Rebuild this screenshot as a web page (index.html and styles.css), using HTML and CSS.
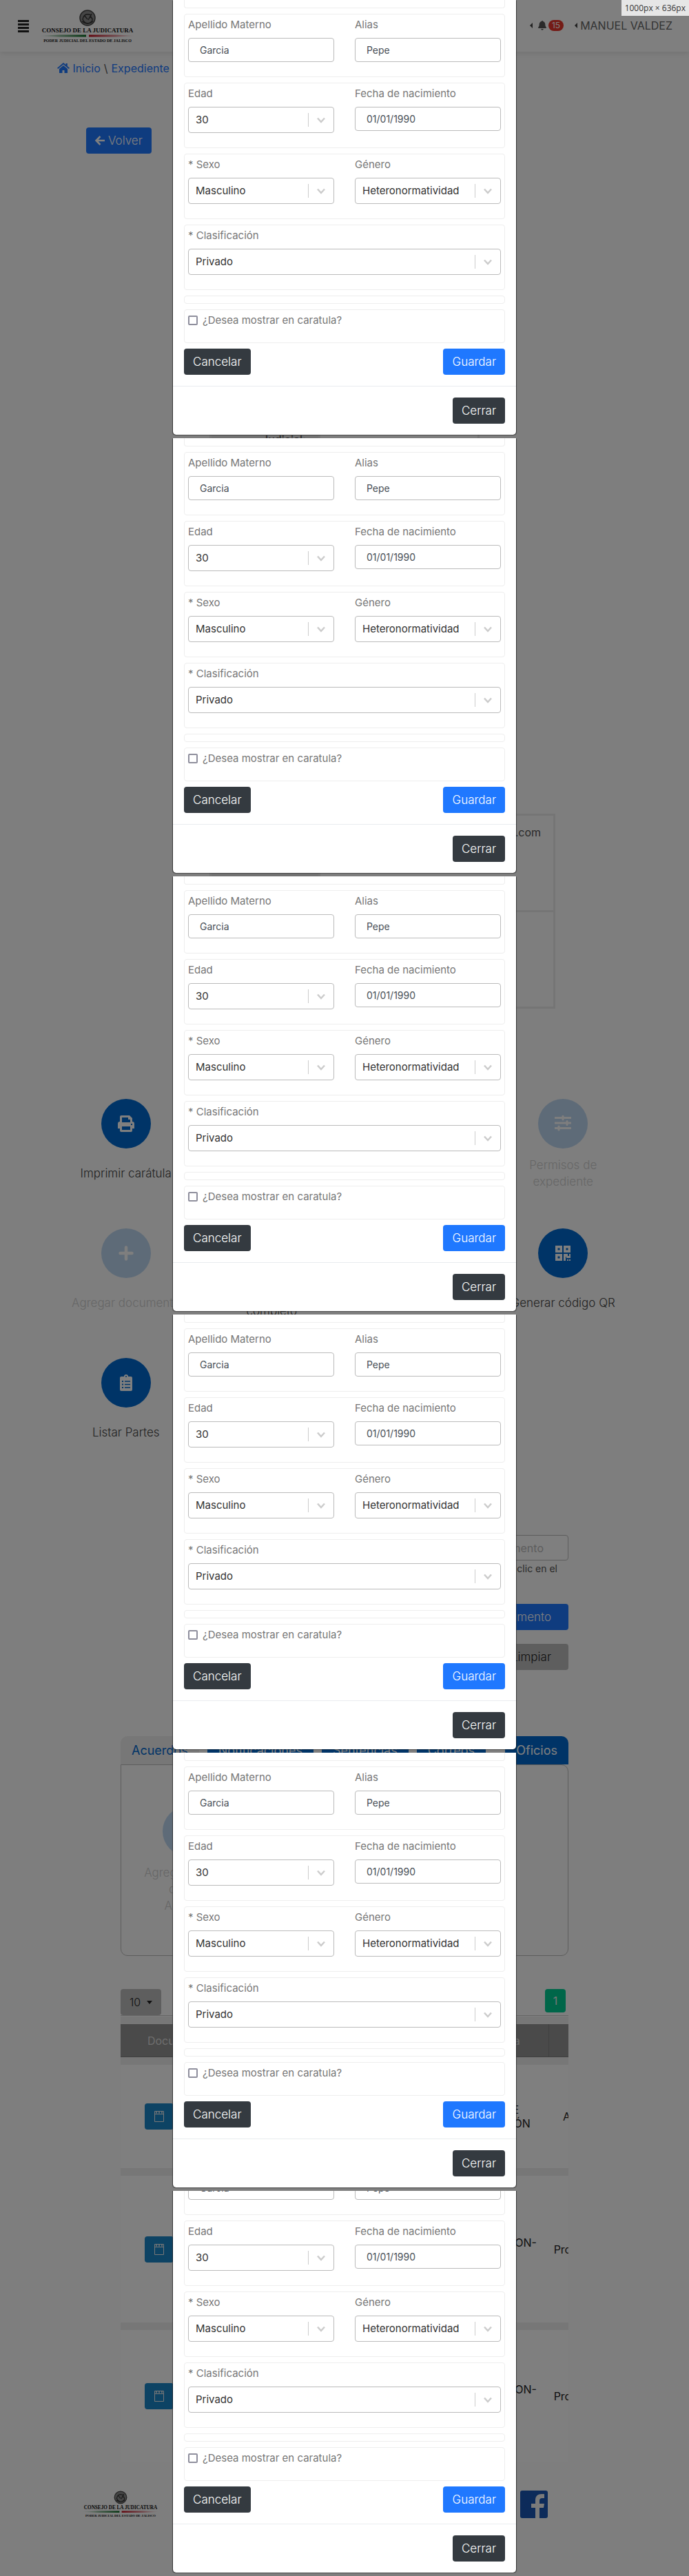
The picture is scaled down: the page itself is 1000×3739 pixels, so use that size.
FILE: index.html
```html
<!DOCTYPE html>
<html lang="es">
<head>
<meta charset="utf-8">
<title>Expediente</title>
<meta name="viewport" content="width=device-width, initial-scale=1">
<link rel="stylesheet" href="styles.css">
</head>
<body>
<svg class="defs" aria-hidden="true">
  <symbol id="logo" viewBox="0 0 142 48">
    <circle cx="71" cy="12" r="11" fill="#8a8a8a" stroke="#444" stroke-width="1.5"/>
    <path d="M64 14c1-6 5-8 9-7 3 0 4 3 2 4 4 1 4 5 1 7-3 3-9 3-12-4zM66 8l5 6M77 6l-5 9M63 17c5 4 11 4 16 0" fill="none" stroke="#333" stroke-width="1.4"/>
    <text x="71" y="33" text-anchor="middle" class="logo-main">CONSEJO DE LA JUDICATURA</text>
    <path d="M0 38l30-1.5h39v3H30z" fill="url(#green)"/>
    <path d="M142 38l-30-1.5H73v3h39z" fill="url(#red)"/>
    <text x="71" y="47" text-anchor="middle" class="logo-sub">PODER JUDICIAL DEL ESTADO DE JALISCO</text>
  </symbol>
  <linearGradient id="green"><stop offset="0" stop-color="#fff"/><stop offset="1" stop-color="#086b22"/></linearGradient>
  <linearGradient id="red"><stop offset="0" stop-color="#c40d1e"/><stop offset="1" stop-color="#fff"/></linearGradient>
  <symbol id="note" viewBox="0 0 14 16"><path d="M.5 .5h13v15H.5zM.5 4.500h13" fill="none" stroke="currentColor"/><path d="M3 1v2.500M7 1v2.500M11 1v2.500" stroke="currentColor" stroke-width="1.500"/></symbol>
</svg>

<div class="page">
  <header class="top">
    <button class="burger" aria-label="Menú"><span></span><span></span><span></span><span></span></button>
    <svg class="logo" role="img" aria-label="Consejo de la Judicatura"><use href="#logo"/></svg>
    <nav class="user">
      <span class="caret-left"></span>
      <svg class="bell" viewBox="0 0 12 14"><path d="M6 0c.6 0 1 .4 1 .9 2 .4 3.300 2 3.300 4.200 0 2.500.6 3.500 1.400 4.400.6.700.2 1.600-.7 1.600H1c-.9 0-1.300-.9-.7-1.600.8-.9 1.400-1.900 1.400-4.400C1.700 2.900 3 1.300 5 .9 5 .4 5.400 0 6 0zM4.300 12h3.400a1.700 1.700 0 0 1-3.400 0z"/></svg>
      <span class="badge">15</span>
      <span class="caret-left"></span>
      <a href="#" class="name">MANUEL VALDEZ</a>
    </nav>
  </header>

  <nav class="crumbs">
    <a href="#"><svg viewBox="0 0 18 15"><path d="M9 0l3.500 3V1h2.300v4L18 7.700l-1.200 1.400L9 2.500 1.200 9.100 0 7.700zM9 4l6 5.100V15h-4.500v-4h-3v4H3V9.100z"/></svg> Inicio</a>
    <span>\</span>
    <a href="#">Expediente</a>
  </nav>

  <a href="#" class="btn blue back"><svg viewBox="0 0 14 14"><path d="M7.500 1L1.500 7l6 6M1.500 7H14" fill="none" stroke="currentColor" stroke-width="2.500"/></svg>Volver</a>

  <table class="info short"><tbody><tr><th>Partido Judicial:</th><td></td></tr></tbody></table>
  <table class="info wide"><tbody>
    <tr><th>Correo electrónico del actor:</th><td>correo@mail.com</td></tr>
    <tr><th></th><td></td></tr>
  </tbody></table>

  <section class="actions">
    <div class="action c1"><button class="disc" aria-label="Imprimir"><svg viewBox="0 0 24 24"><path fill-rule="evenodd" d="M3 2q0-2 2-2h12l4 4v5q3 0 3 3v7h-3v3q0 2-2 2H5q-2 0-2-2v-3H0v-7q0-3 3-3zM6 3v7h12V6h-3V3zM6 16v5h12v-5zM19 12v2h2v-2z"/></svg></button><p>Imprimir carátula</p></div>
    <div class="action c4 off"><button class="disc" aria-label="Permisos" disabled><svg viewBox="0 0 24 24"><path d="M0 3.500h24M0 11h24M0 18.500h24" stroke="currentColor" stroke-width="3"/><path d="M12 1v5M18 8.500v5M6 16v5" stroke="currentColor" stroke-width="3" stroke-linecap="round"/></svg></button><p>Permisos de expediente</p></div>
    <div class="action c1 off"><button class="disc" aria-label="Agregar" disabled><svg viewBox="0 0 24 24"><path d="M12 3.500v17M3.500 12h17" stroke="currentColor" stroke-width="4.500" stroke-linecap="round"/></svg></button><p>Agregar documento</p></div>
    <div class="action c2"><button class="disc" aria-label="Expediente"></button><p>Expediente<br>completo</p></div>
    <div class="action c4"><button class="disc" aria-label="Código QR"><svg viewBox="0 0 24 24"><path fill-rule="evenodd" d="M1 1h10v10H1zM4.500 4.500v3h3v-3zM13 1h10v10H13zM16.500 4.500v3h3v-3zM1 13h10v10H1zM4.500 16.500v3h3v-3zM13 13h6v3h2v-3h2v6h-6v-2h-1v6h-3zM18 21h2v2h-2zM21 21h2v2h-2z"/></svg></button><p>Generar código QR</p></div>
    <div class="action c1"><button class="disc" aria-label="Listar"><svg viewBox="0 0 24 24"><path fill-rule="evenodd" d="M9 3a3 3 0 0 1 6 0h4q2 0 2 2v17q0 2-2 2H5q-2 0-2-2V5q0-2 2-2zM11 3a1 1 0 0 0 2 0 1 1 0 0 0-2 0zM6 9v2h2V9zM10 9.300v1.400h8V9.300zM6 13.500v2h2v-2zM10 13.800v1.400h8v-1.400zM6 18v2h2v-2zM10 18.300v1.400h8v-1.400z"/></svg></button><p>Listar Partes</p></div>
  </section>

  <form class="search">
    <input type="text" placeholder="Nombre del documento" aria-label="Documento">
    <small>Haz clic en el</small>
    <button type="button" class="btn blue">Buscar documento</button>
    <button type="reset" class="btn gray">Limpiar</button>
  </form>

  <section class="docs">
    <nav class="tabs">
      <a href="#" class="tab active">Acuerdos</a><a href="#" class="tab">Notificaciones</a><a href="#" class="tab">Sentencias</a><a href="#" class="tab">Correos</a><a href="#" class="tab">Oficios</a>
    </nav>
    <div class="panel">
      <div class="action off"><button class="disc" aria-label="Agregar" disabled></button><p>Agregar archivo<br>de tipo<br>Acuerdo</p></div>
    </div>
    <div class="tools"><button class="btn gray pager">10 <span class="caret-down"></span></button><button class="num">1</button></div>
    <div class="scroller">
      <table class="list">
        <thead><tr><th class="w1">Documento</th><th class="w2"></th><th class="w2"></th><th class="w3">Categoría</th><th class="w4"></th></tr></thead>
        <tbody>
          <tr class="r1"><td><button class="doc" aria-label="Ver"><svg><use href="#note"/></svg></button></td><td></td><td></td><td>AUTO DE<br>RESOLUCIÓN</td><td>Acuerdo</td></tr>
          <tr class="r2"><td><button class="doc" aria-label="Ver"><svg><use href="#note"/></svg></button></td><td></td><td></td><td>NOTIFICACION-<br>ES</td><td>Promovente</td></tr>
          <tr class="r3"><td><button class="doc" aria-label="Ver"><svg><use href="#note"/></svg></button></td><td></td><td></td><td>NOTIFICACION-<br>ES</td><td>Promovente</td></tr>
        </tbody>
      </table>
    </div>
  </section>

  <footer class="foot">
    <svg class="logo small" role="img" aria-label="Consejo de la Judicatura"><use href="#logo"/></svg>
    <a href="#" aria-label="Facebook"><svg class="fb" viewBox="0 0 40 40"><rect width="40" height="40" rx="3" fill="#1b57b5"/><path d="M22 40V25h-6v-6h6v-5c0-6 3.500-9 9-9h4v6h-3c-3 0-4 1.300-4 4v4h7l-1 6h-6v15z" fill="#f4f4f4"/></svg></a>
  </footer>
</div>

<div class="backdrop">
  <output class="size">1000px × 636px</output>
  <main id="stack"></main>
</div>

<template id="dialog">
  <div class="slice"><form class="modal">
    <div class="body">
      <div class="group cut"></div>
      <div class="group two">
        <label><span>Apellido Materno</span><input type="text" value="Garcia"></label>
        <label><span>Alias</span><input type="text" value="Pepe"></label>
      </div>
      <div class="group two">
        <label><span>Edad</span><span class="pick"><select><option>30</option></select><svg viewBox="0 0 20 20"><path d="M5 7.500l5 5.500 5-5.500"/></svg></span></label>
        <label><span>Fecha de nacimiento</span><input type="text" value="01/01/1990"></label>
      </div>
      <div class="group two">
        <label><span>* Sexo</span><span class="pick"><select><option>Masculino</option></select><svg viewBox="0 0 20 20"><path d="M5 7.500l5 5.500 5-5.500"/></svg></span></label>
        <label><span>Género</span><span class="pick"><select><option>Heteronormatividad</option></select><svg viewBox="0 0 20 20"><path d="M5 7.500l5 5.500 5-5.500"/></svg></span></label>
      </div>
      <div class="group">
        <label><span>* Clasificación</span><span class="pick"><select><option>Privado</option></select><svg viewBox="0 0 20 20"><path d="M5 7.500l5 5.500 5-5.500"/></svg></span></label>
      </div>
      <div class="group empty"></div>
      <div class="group"><label class="check"><input type="checkbox"><span>¿Desea mostrar en caratula?</span></label></div>
      <div class="row"><button type="button" class="btn dark">Cancelar</button><button type="button" class="btn blue">Guardar</button></div>
    </div>
    <div class="end"><button type="button" class="btn dark">Cerrar</button></div>
  </form></div>
</template>
<script src="script.js"></script>
</body>
</html>
```
FILE: script.js
```js
const stack = document.getElementById('stack');
const dialog = document.getElementById('dialog');
for (let i = 0; i < 6; i++) {
  stack.append(dialog.content.cloneNode(true));
}
```
FILE: styles.css
```css
* { box-sizing: border-box; }
body { margin: 0; display: grid; background: #fcfcfc; color: #555; font: 400 16px/24px Inter, "Open Sans", sans-serif; }
button, input, select { font: inherit; color: inherit; margin: 0; }
a { color: #1f78ff; text-decoration: none; }
p { margin: 0; }
.defs { position: absolute; width: 0; height: 0; }
.page, .backdrop { grid-area: 1 / 1; min-width: 0; }
.backdrop { position: relative; z-index: 1; background: rgba(0, 0, 0, .5); }

.btn { display: inline-flex; align-items: center; justify-content: center; gap: 5px; height: 38px; padding: 0 13px; border: 0; border-radius: 4px; font-size: 17px; font-weight: 300; color: #fff; }
.blue { background: #1f78ff; }
.dark { background: #343a40; }
.gray { background: #bdbdbd; color: #222; }

/* header */
.top { display: flex; align-items: center; height: 75px; padding: 0 24px 0 26px; background: #fff; box-shadow: 0 2px 8px rgba(0, 0, 0, .1); }
.burger { display: grid; gap: 2px; width: 16px; padding: 0; border: 0; background: none; }
.burger span { height: 3px; background: #222; }
.logo { width: 142px; height: 48px; margin-left: 14px; }
.logo-main { font: bold 9px "Liberation Serif", serif; fill: #111; }
.logo-sub { font: bold 6px "Liberation Serif", serif; fill: #111; }
.user { display: flex; align-items: center; margin-left: auto; padding-bottom: 2px; }
.caret-left { border: 4px solid transparent; border-left: 0; border-right-color: #444; }
.bell { width: 12px; height: 14px; margin-left: 8px; fill: #555; }
.badge { margin: 0 16px 0 3px; padding: 0 5px; border-radius: 8px; background: #e8362c; color: #fff; font-size: 12px; line-height: 16px; }
.name { margin-left: 4px; color: #666; }
.crumbs { display: flex; gap: 5px; margin: 12px 0 74px 83px; }
.crumbs svg { width: 18px; height: 15px; fill: #1f78ff; vertical-align: -1px; }
.back { margin-left: 125px; }
.back svg { width: 14px; height: 14px; }

/* case data */
.info { margin-left: 304px; border-collapse: collapse; table-layout: fixed; }
.info th, .info td { border: 3px solid #ebebeb; padding: 12px 18px; text-align: right; }
.info th { width: 158px; background: #e4e4e4; font-weight: 500; }
.info td { vertical-align: top; }
.short { width: 392px; height: 80px; margin-top: 363px; }
.wide { width: 502px; height: 283px; margin-top: 515px; }
.wide tr { height: 140px; }

/* action discs */
.actions { display: grid; grid-template-columns: repeat(4, 1fr); gap: 56px 0; margin: 131px 77px 125px; }
.action { display: grid; justify-items: center; gap: 12px; color: #444; font-size: 17px; font-weight: 300; text-align: center; }
.action p { display: flex; align-items: center; min-height: 48px; max-width: 164px; }
.c1 { grid-column: 1; }
.c2 { grid-column: 2; }
.c4 { grid-column: 4; }
.disc { display: grid; place-items: center; width: 72px; height: 72px; padding: 0; border: 0; border-radius: 50%; background: #0068cf; color: #fff; }
.disc svg { width: 24px; height: 24px; fill: currentColor; }
.off { opacity: .25; }

/* search */
.search { display: grid; justify-items: end; width: 400px; margin: 0 175px 96px auto; }
.search input { width: 100%; height: 37px; padding: 0 35px; border: 1px solid #bbb; border-radius: 4px; background: #fff; text-align: right; }
.search input::placeholder { color: #bbb; }
.search small { margin: 2px 16px 41px; font-size: 14px; line-height: 20px; }
.search .btn { padding: 0 25px; }
.search .blue { margin-bottom: 20px; }

/* documents */
.docs { margin: 0 175px; }
.tabs { display: flex; gap: 12px; }
.tab { height: 41px; padding: 0 16px; border-radius: 10px 10px 0 0; background: #0068cf; color: #fff; font-size: 18px; line-height: 41px; }
.tab.active { background: #eee; color: #0068cf; }
.tab:last-child { margin-left: auto; }
.panel { height: 278px; padding: 60px 0; border: 1px solid #bbb; border-radius: 0 10px 10px 10px; }
.panel .action { width: 192px; }
.tools { display: flex; justify-content: space-between; margin-top: 48px; padding-right: 4px; border-bottom: 1px solid #ccc; }
.pager { font-size: 16px; }
.caret-down { border: 4px solid transparent; border-top: 5px solid #222; border-bottom: 0; margin-left: 4px; }
.num { width: 30px; height: 34px; padding: 0; border: 0; border-radius: 4px; background: #00cc92; color: #eee; }
.scroller { overflow: hidden; padding-top: 1px; }
.list { width: 727px; margin-bottom: -11px; table-layout: fixed; border-spacing: 0 11px; background: #efefef; font-size: 16px; line-height: 20px; color: #222; text-align: center; }
.list th { height: 48px; padding: 0; background: #949494; color: #ddd; font-weight: 400; border-bottom: 1px solid #808080; }
.list td { padding: 0; background: #fff; }
.w1 { width: 165px; }
.w2 { width: 150px; }
.w3 { width: 156px; }
.list .w4 { width: 106px; border-left: 1px solid #808080; }
.r1 { height: 150px; }
.r2 { height: 213px; }
.r3 { height: 192px; }
.doc { display: grid; place-items: center; width: 42px; height: 38px; margin-left: 35px; border: 0; border-radius: 4px; background: #1a86c8; color: #eee; }
.doc svg { width: 14px; height: 16px; }
.foot { display: flex; justify-content: space-between; padding: 41px 205px 0 104px; }
.small { width: 114px; height: 39px; }
.fb { display: block; width: 40px; height: 40px; }

/* viewport size readout over the corner */
.size { position: absolute; top: 0; right: 0; padding: 0 5px; background: #e6e6e6; color: #333; font: 12px/23px "Open Sans", sans-serif; }

/* dialog */
.slice { height: 636px; overflow: hidden; }
.slice:last-child { height: 559px; }
.slice:last-child .modal { margin-top: -77px; }
.modal { width: 100%; max-width: 500px; margin: 0 auto; border: 1px solid rgba(0, 0, 0, .3); border-width: 0 1px; border-radius: 0 0 5px 5px; background: #fff; background-clip: padding-box; box-shadow: 0 1px 1px rgba(0, 0, 0, .4); }
.body { display: grid; gap: 8px; padding: 0 16px 16px; }
.group { padding: 3px 5px 21px; border: 1px solid #eee; border-radius: 4px; }
.cut { height: 12px; padding: 0; border-top: 0; border-radius: 0 0 4px 4px; }
.empty { height: 12px; padding: 0; }
.two { display: grid; grid-template-columns: 1fr 1fr; gap: 30px; align-items: start; }
.group label { display: grid; gap: 7px; min-width: 0; color: #777; font-size: 15px; }
.group input[type="text"] { width: 100%; height: 35px; padding: 0 16px; border: 1px solid #bbb; border-radius: 4px; background: #fff; color: #495057; font-size: 14px; }
.pick { display: flex; align-items: center; height: 38px; border: 1px solid #bbb; border-radius: 4px; background: #fff; }
.pick select { flex: 1; min-width: 0; padding: 0 0 0 10px; border: 0; background: none; color: #333; font-size: 15px; appearance: none; }
.pick svg { box-sizing: content-box; width: 20px; height: 20px; padding: 0 8px; border-left: 1px solid #ccc; fill: none; stroke: #ccc; stroke-width: 2.500; }
.group .check { display: flex; align-items: center; height: 23px; }
.check input { appearance: none; width: 14px; height: 14px; border: 2px solid #8f8f9d; border-radius: 2px; }
.row { display: flex; justify-content: space-between; }
.end { display: flex; justify-content: flex-end; padding: 16px; border-top: 1px solid #e9ecef; }
```
